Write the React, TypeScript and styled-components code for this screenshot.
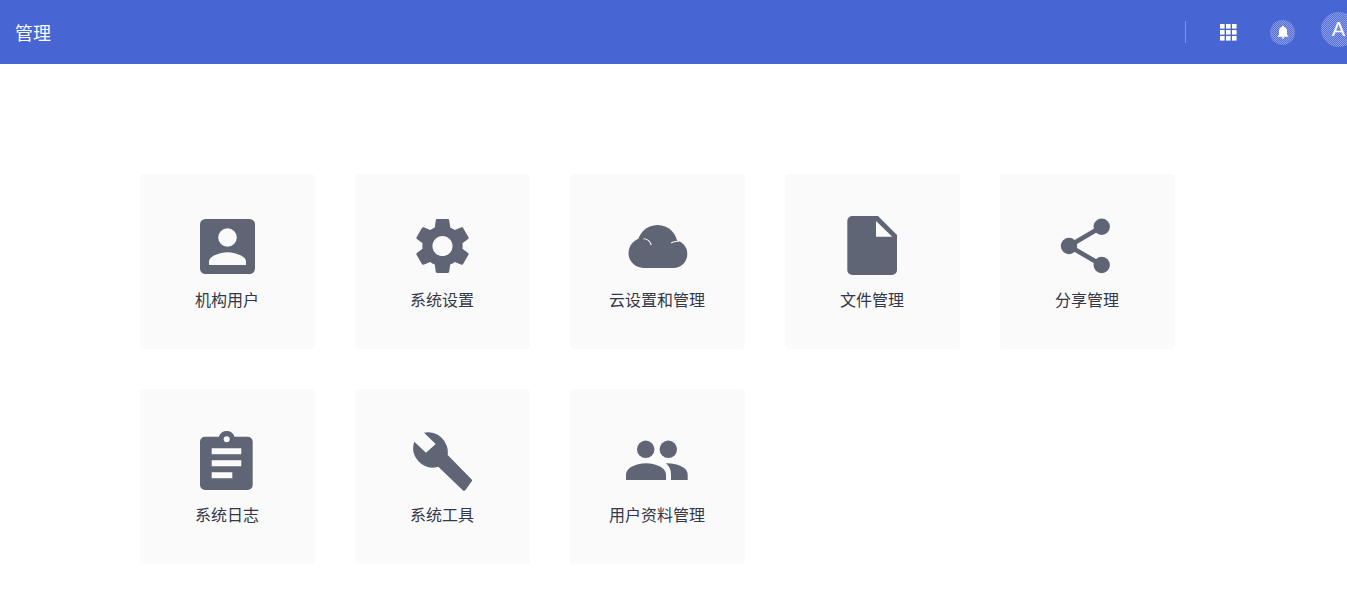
import React from "react";
import styled, { createGlobalStyle } from "styled-components";

const Global = createGlobalStyle`
  html, body { margin: 0; padding: 0; background: #fff; overflow: hidden; }
  body { font-family: "Noto Sans CJK SC", "Liberation Sans", sans-serif; }
`;

const TopBar = styled.header`
  height: 64px;
  background: #4865d4;
  display: flex;
  align-items: center;
  justify-content: space-between;
  padding-left: 15px;
  overflow: hidden;
`;

const Title = styled.h1`
  margin: 0;
  font-size: 18px;
  font-weight: 400;
  line-height: 64px;
  color: #fff;
`;

const Actions = styled.div`
  display: flex;
  align-items: center;
`;

const Divider = styled.span`
  width: 1px;
  height: 22px;
  background: rgba(255, 255, 255, 0.3);
  margin-right: 34px;
`;

const AppsGrid = styled.svg`
  display: block;
  width: 17px;
  height: 17px;
  margin-right: 33px;
`;

const stipple = `
  background-color: rgba(255, 255, 255, 0.08);
  background-image: repeating-conic-gradient(rgba(255, 255, 255, 0.3) 0 25%, transparent 0 50%);
  background-size: 2px 2px;
`;

const BellBadge = styled.span`
  ${stipple}
  width: 25px;
  height: 25px;
  border-radius: 50%;
  display: flex;
  align-items: center;
  justify-content: center;
  margin-right: 26px;
`;

const Avatar = styled.span`
  ${stipple}
  flex: none;
  width: 35px;
  height: 35px;
  border-radius: 50%;
  display: flex;
  align-items: center;
  justify-content: center;
  margin-right: -9px;
  margin-top: -5px;
  color: #fff;
  font-size: 20px;
  font-family: "Liberation Sans", sans-serif;
`;

const Board = styled.main`
  display: grid;
  grid-template-columns: repeat(5, 175px);
  gap: 40px;
  padding: 110px 0 0 140px;
`;

const Tile = styled.a`
  width: 175px;
  height: 175px;
  box-sizing: border-box;
  padding: 40px 1px 0 0;
  background: #fafafa;
  border-radius: 4px;
  display: flex;
  flex-direction: column;
  align-items: center;
`;

const Glyph = styled.svg`
  display: block;
  width: 64px;
  height: 64px;
  fill: #5f6575;
`;

const Label = styled.span`
  margin-top: 9px;
  font-size: 16px;
  line-height: 24px;
  color: #343747;
  white-space: nowrap;
`;

const SHEET = "#fafafa";

const items: { label: string; icon: React.ReactNode }[] = [
  {
    label: "机构用户",
    icon: (
      <>
        <rect x="4.5" y="5" width="55" height="55" rx="5.5" />
        <circle cx="32" cy="23.5" r="9.3" fill={SHEET} />
        <path d="M13.5 51v-3.5c0-5.6 11.6-9.2 18.5-9.2s18.5 3.6 18.5 9.2V51z" fill={SHEET} />
      </>
    ),
  },
  {
    label: "系统设置",
    icon: (
      <g transform="translate(32 32) scale(2.8) translate(-12 -12)">
        <path d="M19.14 12.94c.04-.3.06-.61.06-.94 0-.32-.02-.64-.07-.94l2.03-1.58a.49.49 0 0 0 .12-.61l-1.92-3.32a.488.488 0 0 0-.59-.22l-2.39.96c-.5-.38-1.03-.7-1.62-.94l-.36-2.54a.484.484 0 0 0-.48-.41h-3.84c-.24 0-.43.17-.47.41l-.36 2.54c-.59.24-1.13.57-1.62.94l-2.39-.96c-.22-.08-.47 0-.59.22L2.74 8.87c-.12.21-.08.47.12.61l2.03 1.58c-.05.3-.09.63-.09.94s.02.64.07.94l-2.03 1.58a.49.49 0 0 0-.12.61l1.92 3.32c.12.22.37.29.59.22l2.39-.96c.5.38 1.03.7 1.62.94l.36 2.54c.05.24.24.41.48.41h3.84c.24 0 .44-.17.47-.41l.36-2.54c.59-.24 1.13-.56 1.62-.94l2.39.96c.22.08.47 0 .59-.22l1.92-3.32c.12-.22.07-.47-.12-.61l-2.01-1.58zM12 15.6c-1.98 0-3.6-1.62-3.6-3.6s1.62-3.6 3.6-3.6 3.6 1.62 3.6 3.6-1.62 3.6-3.6 3.6z" />
      </g>
    ),
  },
  {
    label: "云设置和管理",
    icon: (
      <>
        <circle cx="32" cy="31" r="20" />
        <path d="M18 54a15 15 0 0 1 0-30c3 0 6 1 8 3 2-1 6-1 12 0 2-1 5-1.500 9.800-1a14 14 0 0 1 0 28z" />
        <path d="M18 24.700c3.500 0 6.500 2.500 7.800 6.300" fill="none" stroke={SHEET} strokeWidth="1.1" />
        <path d="M45.500 29c2.500-1.300 5-2 8-1.600" fill="none" stroke={SHEET} strokeWidth="1.1" />
      </>
    ),
  },
  {
    label: "文件管理",
    icon: (
      <>
        <path d="M12 2h25.500L56.500 21v35a5 5 0 0 1-5 5H11.800a5 5 0 0 1-5-5V7a5 5 0 0 1 5-5z" />
        <path d="M35.500 7 51.800 22.700H35.500z" fill={SHEET} />
      </>
    ),
  },
  {
    label: "分享管理",
    icon: (
      <>
        <path d="M46.200 12.700 13.500 32l32.700 19" fill="none" stroke="#5f6575" strokeWidth="4.600" />
        <circle cx="46.200" cy="12.700" r="8.200" />
        <circle cx="13.500" cy="32" r="8.200" />
        <circle cx="46.200" cy="51" r="8.200" />
      </>
    ),
  },
  {
    label: "系统日志",
    icon: (
      <>
        <path d="M9.500 7.700h13.900a8.200 8.200 0 0 1 15.600 0h13.200a5 5 0 0 1 5 5V56a5 5 0 0 1-5 5H9.500a5 5 0 0 1-5-5V12.700a5 5 0 0 1 5-5z" />
        <circle cx="31.200" cy="10.300" r="3" fill={SHEET} />
        <path d="M16.200 19.300h29.600v6H16.200zM16.200 31.300h29.600v6H16.200zM16.200 43.300h20.600v6H16.200z" fill={SHEET} />
      </>
    ),
  },
  {
    label: "系统工具",
    icon: (
      <path d="M3.800 12.700 15.500 23.700 25.200 15 13.500 3.700A20 20 0 0 1 37.200 26L60.700 50a2 2 0 0 1 0 3L55 61a2 2 0 0 1-3 0L27.800 37.700A19.500 19.500 0 0 1 3.800 12.700z" />
    ),
  },
  {
    label: "用户资料管理",
    icon: (
      <>
        <circle cx="20.200" cy="20.300" r="8.700" />
        <circle cx="42.800" cy="20.300" r="8.700" />
        <path d="M.5 51v-5.500c0-7 11-11.200 20-11.200s20 4.200 20 11.200V51z" />
        <path d="M40.500 34.300c10 0 21.700 3.500 21.700 11.200V51H45.500v-6c0-4-1.500-7.500-5-10.700z" />
      </>
    ),
  },
];

export default function App() {
  return (
    <>
      <Global />
      <TopBar>
        <Title>管理</Title>
        <Actions>
          <Divider />
          <AppsGrid viewBox="0 0 17 17" fill="#fff">
            {[0, 6, 12].map((y) =>
              [0, 6, 12].map((x) => <rect key={`${x}-${y}`} x={x} y={y} width="4.6" height="4.6" />)
            )}
          </AppsGrid>
          <BellBadge>
            <svg width="16" height="16" viewBox="0 0 24 24" fill="#fff">
              <path d="M12 22c1.100 0 2-.9 2-2h-4c0 1.100.9 2 2 2zm6-6v-5c0-3.070-1.640-5.640-4.500-6.320V4c0-.83-.67-1.500-1.500-1.500s-1.500.67-1.500 1.500v.68C7.630 5.360 6 7.920 6 11v5l-2 2v1h16v-1l-2-2z" />
            </svg>
          </BellBadge>
          <Avatar>A</Avatar>
        </Actions>
      </TopBar>
      <Board>
        {items.map((it) => (
          <Tile key={it.label}>
            <Glyph viewBox="-0.5 0 64 64">{it.icon}</Glyph>
            <Label>{it.label}</Label>
          </Tile>
        ))}
      </Board>
    </>
  );
}
